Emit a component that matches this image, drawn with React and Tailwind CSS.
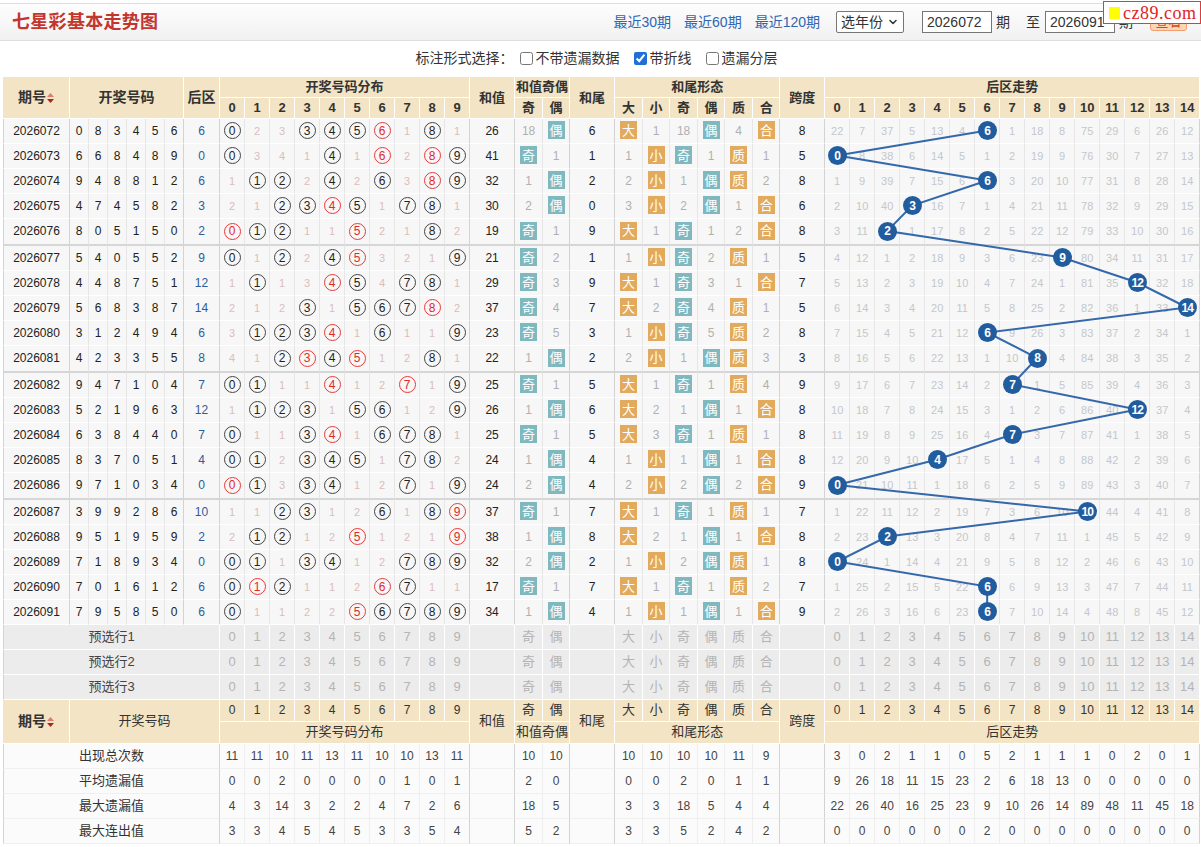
import React, { useLayoutEffect, useRef, useState } from 'react';
import { ChevronDown } from 'lucide-react';

const draws = [
  ['2026072', [0, 8, 3, 4, 5, 6], 6],
  ['2026073', [6, 6, 8, 4, 8, 9], 0],
  ['2026074', [9, 4, 8, 8, 1, 2], 6],
  ['2026075', [4, 7, 4, 5, 8, 2], 3],
  ['2026076', [8, 0, 5, 1, 5, 0], 2],
  ['2026077', [5, 4, 0, 5, 5, 2], 9],
  ['2026078', [4, 4, 8, 7, 5, 1], 12],
  ['2026079', [5, 6, 8, 3, 8, 7], 14],
  ['2026080', [3, 1, 2, 4, 9, 4], 6],
  ['2026081', [4, 2, 3, 3, 5, 5], 8],
  ['2026082', [9, 4, 7, 1, 0, 4], 7],
  ['2026083', [5, 2, 1, 9, 6, 3], 12],
  ['2026084', [6, 3, 8, 4, 4, 0], 7],
  ['2026085', [8, 3, 7, 0, 5, 1], 4],
  ['2026086', [9, 7, 1, 0, 3, 4], 0],
  ['2026087', [3, 9, 9, 2, 8, 6], 10],
  ['2026088', [9, 5, 1, 9, 5, 9], 2],
  ['2026089', [7, 1, 8, 9, 3, 4], 0],
  ['2026090', [7, 0, 1, 6, 1, 2], 6],
  ['2026091', [7, 9, 5, 8, 5, 0], 6],
];

const stats = [
  ['出现总次数', [11, 11, 10, 11, 13, 11, 10, 10, 13, 11], [10, 10], [10, 10, 10, 10, 11, 9], [3, 0, 2, 1, 1, 0, 5, 2, 1, 1, 1, 0, 2, 0, 1]],
  ['平均遗漏值', [0, 0, 2, 0, 0, 0, 0, 1, 0, 1], [2, 0], [0, 0, 2, 0, 1, 1], [9, 26, 18, 11, 15, 23, 2, 6, 18, 13, 0, 0, 0, 0, 0]],
  ['最大遗漏值', [4, 3, 14, 3, 2, 2, 4, 7, 2, 6], [18, 5], [3, 3, 18, 5, 4, 4], [22, 26, 40, 16, 25, 23, 9, 10, 26, 14, 89, 48, 11, 45, 18]],
  ['最大连出值', [3, 3, 4, 5, 4, 5, 3, 3, 5, 4], [5, 2], [3, 3, 5, 2, 4, 2], [0, 0, 0, 0, 0, 0, 2, 0, 0, 0, 0, 0, 0, 0, 0]],
];

const PRIME = [1, 2, 3, 5, 7];
const DIGITS = [0, 1, 2, 3, 4, 5, 6, 7, 8, 9];
const BACKS = [0, 1, 2, 3, 4, 5, 6, 7, 8, 9, 10, 11, 12, 13, 14];
const SHAPES = ['大', '小', '奇', '偶', '质', '合'];

// 遗漏从上一期延续下来
function pair(state, hit) {
  return state.map((m, i) => {
    if (i === hit) {
      state[i] = 0;
      return null;
    }
    state[i] = m + 1;
    return state[i];
  });
}

function buildRows() {
  const dm = [0, 1, 2, 0, 0, 0, 0, 0, 0, 0];
  const bm = [21, 6, 36, 4, 12, 3, 0, 0, 17, 7, 74, 28, 5, 25, 11];
  const oeS = [17, 0];
  const bsS = [0, 0];
  const toeS = [17, 0];
  const pcS = [3, 0];
  return draws.map(([issue, nums, back]) => {
    const cnt = Array(10).fill(0);
    nums.forEach((n) => cnt[n]++);
    if (back < 10) cnt[back]++;
    const dist = cnt.map((c, d) => {
      if (c) {
        dm[d] = 0;
        return { c };
      }
      dm[d] += 1;
      return { m: dm[d] };
    });
    const sum = nums.reduce((a, b) => a + b, 0);
    const tail = sum % 10;
    const span = Math.max(...nums) - Math.min(...nums);
    const oe = pair(oeS, sum % 2 ? 0 : 1);
    const shape = [
      ...pair(bsS, tail >= 5 ? 0 : 1),
      ...pair(toeS, tail % 2 ? 0 : 1),
      ...pair(pcS, PRIME.includes(tail) ? 0 : 1),
    ];
    const backs = bm.map((m, i) => {
      if (i === back) {
        bm[i] = 0;
        return null;
      }
      bm[i] = m + 1;
      return bm[i];
    });
    return { issue, nums, back, dist, sum, tail, span, oe, shape, backs };
  });
}

const rows = buildRows();

const MAJ = 'border-r-[#d3d3d3]';
const MIN = 'border-r-[#e6e6e6]';
const TD = 'p-0 text-center align-middle border-r';
const TH = 'bg-[#f2e4c4] text-[#333] border-r border-b border-r-white border-b-white p-0 text-center align-middle whitespace-nowrap';
const orange = 'bg-[#e2aa5c]';
const teal = 'bg-[#80b8bf]';

const SortArrow = () => (
  <svg width="7" height="10" viewBox="0 0 7 10" className="inline-block ml-[1px] align-[-1px]">
    <polygon points="3.5,0 7,4 0,4" fill="#e07a6a" />
    <polygon points="0,6 7,6 3.5,10" fill="#a8261c" />
  </svg>
);

const Box = ({ color, children }) => (
  <span className={`inline-flex items-center justify-center w-[17px] h-[18px] text-white text-[13px] leading-none ${color}`}>
    {children}
  </span>
);

function TopBar() {
  return (
    <div className="relative mt-[3px] h-[38px] border-y border-[#dedede] bg-gradient-to-b from-[#fdfdfd] to-[#f1f1f1] flex items-center justify-between pl-[12px] pr-[14px]">
      <div className="text-[18px] font-bold text-[#c3352e] tracking-[0.3px]">七星彩基本走势图</div>
      <div className="flex items-center text-[14px] text-[#333]">
        <span className="text-[#2f66b3]">最近30期</span>
        <span className="text-[#2f66b3] ml-[13px]">最近60期</span>
        <span className="text-[#2f66b3] ml-[13px]">最近120期</span>
        <div className="ml-[16px] w-[68px] h-[22px] border border-[#767676] rounded-[2px] bg-white flex items-center justify-between px-[4px]">
          选年份
          <ChevronDown size={12} strokeWidth={3} />
        </div>
        <div className="ml-[18px] w-[70px] h-[22px] border border-[#767676] bg-white flex items-center px-[4px]">2026072</div>
        <span className="ml-[4px]">期</span>
        <span className="ml-[16px]">至</span>
        <div className="ml-[5px] w-[70px] h-[22px] border border-[#767676] bg-white flex items-center px-[4px]">2026091</div>
        <span className="ml-[4px]">期</span>
        <div className="ml-[17px] w-[37px] h-[18px] rounded-[3px] border border-[#f0a070] bg-[#fdd4b6] text-[#d04a20] text-[13px] flex items-center justify-center">
          查看
        </div>
      </div>
      <div className="absolute right-0 top-[-3px] w-[98px] h-[23px] bg-white border border-[#e23b3b] flex items-center">
        <span className="ml-[5px] w-[11px] h-[12px] bg-[#ffff00]" />
        <span className="ml-[3px] text-[18px] leading-none text-[#e02424] font-[family-name:Liberation_Serif,serif] tracking-[0.5px]">cz89.com</span>
      </div>
    </div>
  );
}

function Options() {
  return (
    <div className="h-[34px] flex items-center justify-center text-[14px] text-[#333] pr-[8px]">
      <span>标注形式选择：</span>
      <label className="ml-[6px] flex items-center">
        <input type="checkbox" readOnly className="w-[13px] h-[13px] mr-[3px]" />
        不带遗漏数据
      </label>
      <label className="ml-[14px] flex items-center">
        <input type="checkbox" readOnly checked className="w-[13px] h-[13px] mr-[3px] accent-[#1e6fd6]" />
        带折线
      </label>
      <label className="ml-[14px] flex items-center">
        <input type="checkbox" readOnly className="w-[13px] h-[13px] mr-[3px]" />
        遗漏分层
      </label>
    </div>
  );
}

function ColGroup() {
  return (
    <colgroup>
      <col className="w-[67px]" />
      {[0, 1, 2, 3, 4, 5].map((i) => <col key={'n' + i} className="w-[19px]" />)}
      <col className="w-[36px]" />
      {DIGITS.map((i) => <col key={'d' + i} className="w-[25px]" />)}
      <col className="w-[45px]" />
      <col className="w-[28px]" />
      <col className="w-[27px]" />
      <col className="w-[45px]" />
      <col className="w-[28px]" />
      <col className="w-[27px]" />
      <col className="w-[28px]" />
      <col className="w-[27px]" />
      <col className="w-[28px]" />
      <col className="w-[27px]" />
      <col className="w-[45px]" />
      {BACKS.map((i) => <col key={'b' + i} className="w-[25px]" />)}
    </colgroup>
  );
}

function DataRow({ r, i }) {
  const last = i % 5 === 4 && i < rows.length - 1;
  const bb = last ? 'h-[27px] border-b-2 border-b-[#d6d6d6]' : 'h-[25px] border-b border-b-white';
  const c = `${TD} ${bb}`;
  return (
    <tr className="bg-[#f7f7f7] text-[12px] text-[#222]">
      <td className={`${c} ${MAJ} border-l border-l-[#d3d3d3]`}>{r.issue}</td>
      {r.nums.map((n, k) => (
        <td key={k} className={`${c} ${k === 5 ? MAJ : MIN}`}>{n}</td>
      ))}
      <td className={`${c} ${MAJ} text-[#2c5c9c]`}>{r.back}</td>
      {r.dist.map((d, k) => (
        <td key={k} className={`${c} ${k === 9 ? MAJ : MIN}`}>
          {d.c ? (
            <span
              className={`inline-flex items-center justify-center w-[17px] h-[17px] rounded-full border leading-none text-[12px] ${
                d.c > 1 ? 'border-[#e8393a] text-[#e02a2a]' : 'border-[#444] text-[#222]'
              }`}
            >
              {k}
            </span>
          ) : (
            <span className="text-[#dcbcbc] text-[11px]">{d.m}</span>
          )}
        </td>
      ))}
      <td className={`${c} ${MAJ}`}>{r.sum}</td>
      {r.oe.map((m, k) => (
        <td key={k} className={`${c} ${k === 1 ? MAJ : MIN}`}>
          {m === null ? <Box color={teal}>{k ? '偶' : '奇'}</Box> : <span className="text-[#b0b0b0]">{m}</span>}
        </td>
      ))}
      <td className={`${c} ${MAJ}`}>{r.tail}</td>
      {r.shape.map((m, k) => (
        <td key={k} className={`${c} ${k === 5 ? MAJ : MIN}`}>
          {m === null ? (
            <Box color={k === 2 || k === 3 ? teal : orange}>{SHAPES[k]}</Box>
          ) : (
            <span className="text-[#b0b0b0]">{m}</span>
          )}
        </td>
      ))}
      <td className={`${c} ${MAJ}`}>{r.span}</td>
      {r.backs.map((m, k) => (
        <td key={k} className={`${c} ${k === 14 ? MAJ : MIN}`}>
          {m === null ? (
            <span
              data-ball
              className="relative z-10 inline-flex items-center justify-center w-[19px] h-[19px] rounded-full bg-[#215c9e] text-white text-[12px] font-bold leading-none tracking-[-1px]"
            >
              {k}
            </span>
          ) : (
            <span className="text-[#c4c7cc] text-[11px]">{m}</span>
          )}
        </td>
      ))}
    </tr>
  );
}

const PRE = 'h-[25px] p-0 text-center align-middle border-r border-b border-r-white border-b-white text-[13px]';

function PreRow({ label }) {
  const c = `${PRE} text-[#b4b4b4]`;
  return (
    <tr className="bg-[#ececec]">
      <td colSpan={8} className={`${PRE} border-l border-l-[#d3d3d3] text-[#444]`}>{label}</td>
      {DIGITS.map((d) => <td key={d} className={c}>{d}</td>)}
      <td className={c} />
      <td className={c}>奇</td>
      <td className={c}>偶</td>
      <td className={c} />
      {SHAPES.map((s) => <td key={s} className={c}>{s}</td>)}
      <td className={c} />
      {BACKS.map((d) => <td key={d} className={c}>{d}</td>)}
    </tr>
  );
}

const ST = 'h-[25px] p-0 text-center align-middle border-r border-b border-b-[#f0f0f0]';

function StatRow({ s }) {
  const c = `${ST} border-r-[#eeeeee] text-[#444] text-[12px]`;
  const cm = `${ST} border-r-[#d3d3d3] text-[#444] text-[12px]`;
  const [label, dist, oe, shape, backs] = s;
  return (
    <tr className="bg-[#fbfbfb]">
      <td colSpan={8} className={`${ST} border-l border-l-[#d3d3d3] border-r-[#d3d3d3] text-[13px] text-[#333]`}>{label}</td>
      {dist.map((v, k) => <td key={k} className={k === 9 ? cm : c}>{v}</td>)}
      <td className={cm} />
      {oe.map((v, k) => <td key={k} className={k === 1 ? cm : c}>{v}</td>)}
      <td className={cm} />
      {shape.map((v, k) => <td key={k} className={k === 5 ? cm : c}>{v}</td>)}
      <td className={cm} />
      {backs.map((v, k) => <td key={k} className={k === 14 ? cm : c}>{v}</td>)}
    </tr>
  );
}

export default function App() {
  const wrapRef = useRef(null);
  const [pts, setPts] = useState('');

  useLayoutEffect(() => {
    const w = wrapRef.current;
    const box = w.getBoundingClientRect();
    const p = [...w.querySelectorAll('[data-ball]')]
      .map((el) => {
        const r = el.getBoundingClientRect();
        return `${r.left - box.left + r.width / 2},${r.top - box.top + r.height / 2}`;
      })
      .join(' ');
    setPts(p);
  }, []);

  const h14b = `${TH} text-[14px] font-bold`;
  const h13b = `${TH} text-[13px] font-bold`;
  const h13 = `${TH} text-[13px] font-normal`;
  const h12 = `${TH} text-[12px] font-normal`;

  return (
    <div className="w-[1201px] h-[847px] overflow-hidden bg-white font-[family-name:Liberation_Sans,Noto_Sans_CJK_SC,sans-serif]">
      <TopBar />
      <Options />
      <div ref={wrapRef} className="relative ml-[3px] mt-[2px] w-[1197px]">
        <table className="table-fixed border-separate border-spacing-0 w-[1197px]">
          <ColGroup />
          <thead>
            <tr className="h-[21px]">
              <th rowSpan={2} className={h14b}>期号<SortArrow /></th>
              <th rowSpan={2} colSpan={6} className={h14b}>开奖号码</th>
              <th rowSpan={2} className={h14b}>后区</th>
              <th colSpan={10} className={h13b}>开奖号码分布</th>
              <th rowSpan={2} className={h13b}>和值</th>
              <th colSpan={2} className={h13b}>和值奇偶</th>
              <th rowSpan={2} className={h13b}>和尾</th>
              <th colSpan={6} className={h13b}>和尾形态</th>
              <th rowSpan={2} className={h13b}>跨度</th>
              <th colSpan={15} className={h13b}>后区走势</th>
            </tr>
            <tr className="h-[20px]">
              {DIGITS.map((d) => <th key={d} className={h13b}>{d}</th>)}
              <th className={h13b}>奇</th>
              <th className={h13b}>偶</th>
              {SHAPES.map((s) => <th key={s} className={h13b}>{s}</th>)}
              {BACKS.map((d) => <th key={d} className={h13b}>{d}</th>)}
            </tr>
          </thead>
          <tbody>
            {rows.map((r, i) => <DataRow key={r.issue} r={r} i={i} />)}
            <PreRow label="预选行1" />
            <PreRow label="预选行2" />
            <PreRow label="预选行3" />
            <tr className="h-[22px]">
              <th rowSpan={2} className={h14b}>期号<SortArrow /></th>
              <th rowSpan={2} colSpan={7} className={h13}>开奖号码</th>
              {DIGITS.map((d) => <th key={d} className={h12}>{d}</th>)}
              <th rowSpan={2} className={h13}>和值</th>
              <th className={h13}>奇</th>
              <th className={h13}>偶</th>
              <th rowSpan={2} className={h13}>和尾</th>
              {SHAPES.map((s) => <th key={s} className={h13}>{s}</th>)}
              <th rowSpan={2} className={h13}>跨度</th>
              {BACKS.map((d) => <th key={d} className={h12}>{d}</th>)}
            </tr>
            <tr className="h-[22px]">
              <th colSpan={10} className={h13}>开奖号码分布</th>
              <th colSpan={2} className={h13}>和值奇偶</th>
              <th colSpan={6} className={h13}>和尾形态</th>
              <th colSpan={15} className={h13}>后区走势</th>
            </tr>
            {stats.map((s) => <StatRow key={s[0]} s={s} />)}
          </tbody>
        </table>
        <svg className="absolute inset-0 w-full h-full pointer-events-none">
          <polyline points={pts} fill="none" stroke="#3468ab" strokeWidth="2" />
        </svg>
      </div>
    </div>
  );
}
